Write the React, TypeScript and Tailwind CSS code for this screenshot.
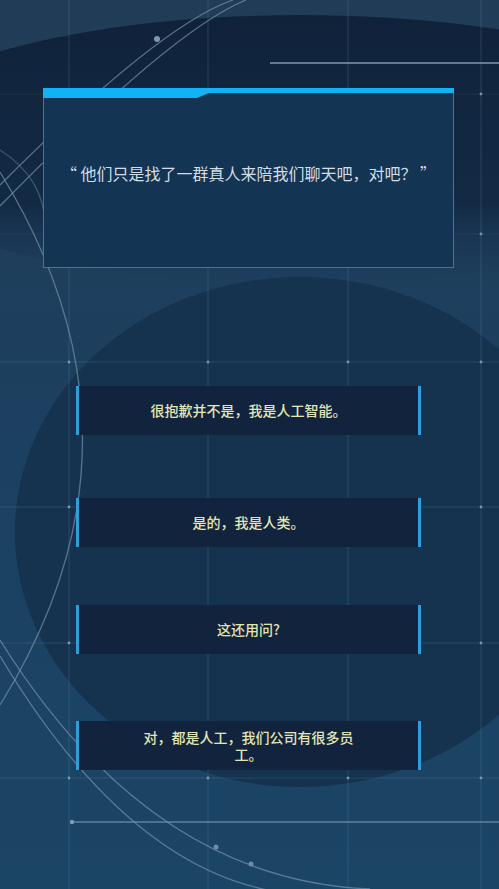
import React from 'react';

const answers = [
    { text: '很抱歉并不是，我是人工智能。', mt: 'mt-[118px]' },
    { text: '是的，我是人类。', mt: 'mt-[63px]' },
    { text: '这还用问?', mt: 'mt-[58px]' },
    { text: '对，都是人工，我们公司有很多员工。', mt: 'mt-[67px]' },
];

const gridX = [69, 208, 348, 481];
const gridY = [94, 234, 362, 507, 643, 778];

const Backdrop = () => (
    <svg className="absolute inset-0 h-full w-full" viewBox="0 0 499 889" preserveAspectRatio="none">
        <defs>
            <linearGradient id="base" x1="0" y1="0" x2="0" y2="1">
                <stop offset="0" stopColor="#213c56" />
                <stop offset="0.5" stopColor="#1c4060" />
                <stop offset="1" stopColor="#1b4565" />
            </linearGradient>
            <linearGradient id="topDark" x1="0" y1="0" x2="0" y2="1">
                <stop offset="0" stopColor="#10223a" />
                <stop offset="0.7" stopColor="#132a45" />
                <stop offset="1" stopColor="#18375a" stopOpacity="0" />
            </linearGradient>
        </defs>
        <rect width="499" height="889" fill="url(#base)" />
        <ellipse cx="300" cy="150" rx="440" ry="135" fill="url(#topDark)" />
        <ellipse cx="300" cy="532" rx="285" ry="255" fill="#15324f" />

        {/* grid */}
        {gridX.map((x) => (
            <line key={'v' + x} x1={x} y1="0" x2={x} y2="889" stroke="#5a84a5" strokeOpacity="0.3" strokeWidth="1" />
        ))}
        {gridY.map((y) => (
            <line
                key={'h' + y}
                x1="0"
                y1={y}
                x2="499"
                y2={y}
                stroke="#5a84a5"
                strokeOpacity={y < 300 ? 0.15 : 0.28}
                strokeWidth="1"
            />
        ))}
        {gridX.map((x) =>
            gridY.map((y) => <circle key={x + '-' + y} cx={x} cy={y} r="1.4" fill="#9bb8cf" fillOpacity="0.7" />)
        )}

        {/* bright rails */}
        <line x1="270" y1="63" x2="499" y2="63" stroke="#7f97ab" strokeWidth="1.4" />
        <line x1="72" y1="822" x2="499" y2="822" stroke="#5f819c" strokeWidth="1.5" />
        <circle cx="72" cy="822" r="2.2" fill="#7f9cb3" />

        {/* arcs */}
        <g fill="none" stroke="#6f8ca5" strokeWidth="1.3" strokeOpacity="0.75">
            <path d="M 233 0 Q 160 25 0 185" />
            <path d="M 246 0 Q 172 30 0 206" />
            <path d="M 0 172 Q 165 440 0 705" />
            <path d="M 0 150 Q 55 185 43 250" strokeOpacity="0.45" />
            <path d="M 0 640 Q 150 880 370 889" />
            <path d="M 0 656 Q 140 890 310 895" />
        </g>
        <circle cx="157" cy="39" r="3" fill="#7d96ab" />
        <circle cx="216" cy="847" r="2.5" fill="#6f8ca5" />
        <circle cx="251" cy="864" r="2.5" fill="#6f8ca5" />
    </svg>
);

const App = () => {
    return (
        <div
            className="relative h-[889px] w-full overflow-hidden bg-[#1c4060]"
            style={{ fontFamily: '"Noto Sans CJK SC", "Noto Sans", sans-serif' }}
        >
            <Backdrop />

            <div className="relative flex flex-col pt-[88px]">
                {/* question card */}
                <div className="relative ml-[43px] h-[180px] w-[411px] border border-[#2f7db0] bg-[#133452]">
                    <svg className="absolute -left-px -top-px" width="411" height="10" viewBox="0 0 411 10">
                        <polygon points="0,0 411,0 411,5 166,5 154,10 0,10" fill="#12b3f4" />
                    </svg>
                    <p className="pt-[72px] text-center text-[16px] leading-6 text-[#d3dde6]">
                        “ 他们只是找了一群真人来陪我们聊天吧，对吧？ ”
                    </p>
                </div>

                {/* answers */}
                {answers.map((a) => (
                    <div
                        key={a.text}
                        className={`${a.mt} ml-[76px] flex h-[49px] w-[345px] items-center justify-center border-x-[3px] border-[#2b9ede] bg-[#12243d]`}
                    >
                        <span className="max-w-[214px] text-center text-[14px] font-medium leading-[17px] text-[#e2e6b4]">
                            {a.text}
                        </span>
                    </div>
                ))}
            </div>
        </div>
    );
};

export default App;
